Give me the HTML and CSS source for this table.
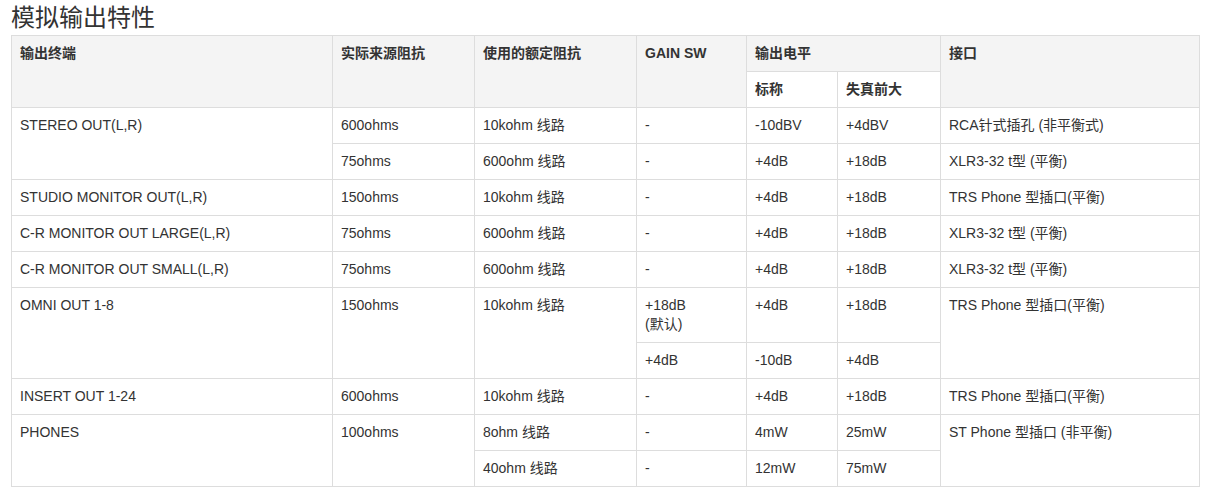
FILE: index.html
```html
<!DOCTYPE html>
<html lang="zh-CN">
<head>
<meta charset="utf-8">
<title>模拟输出特性</title>
<link rel="stylesheet" href="styles.css">
</head>
<body>
<div class="page">
  <h2 class="title">模拟输出特性</h2>
  <table class="spec">
    <colgroup>
      <col class="c1"><col class="c2"><col class="c3"><col class="c4"><col class="c5"><col class="c6"><col class="c7">
    </colgroup>
    <thead>
      <tr class="head-main">
        <th rowspan="2">输出终端</th>
        <th rowspan="2">实际来源阻抗</th>
        <th rowspan="2">使用的额定阻抗</th>
        <th rowspan="2">GAIN SW</th>
        <th colspan="2">输出电平</th>
        <th rowspan="2">接口</th>
      </tr>
      <tr class="head-sub">
        <th>标称</th>
        <th>失真前大</th>
      </tr>
    </thead>
    <tbody>
      <tr>
        <td rowspan="2">STEREO OUT(L,R)</td>
        <td>600ohms</td><td>10kohm 线路</td><td>-</td><td>-10dBV</td><td>+4dBV</td><td>RCA针式插孔 (非平衡式)</td>
      </tr>
      <tr>
        <td>75ohms</td><td>600ohm 线路</td><td>-</td><td>+4dB</td><td>+18dB</td><td>XLR3-32 t型 (平衡)</td>
      </tr>
      <tr>
        <td>STUDIO MONITOR OUT(L,R)</td><td>150ohms</td><td>10kohm 线路</td><td>-</td><td>+4dB</td><td>+18dB</td><td>TRS Phone 型插口(平衡)</td>
      </tr>
      <tr>
        <td>C-R MONITOR OUT LARGE(L,R)</td><td>75ohms</td><td>600ohm 线路</td><td>-</td><td>+4dB</td><td>+18dB</td><td>XLR3-32 t型 (平衡)</td>
      </tr>
      <tr>
        <td>C-R MONITOR OUT SMALL(L,R)</td><td>75ohms</td><td>600ohm 线路</td><td>-</td><td>+4dB</td><td>+18dB</td><td>XLR3-32 t型 (平衡)</td>
      </tr>
      <tr>
        <td rowspan="2">OMNI OUT 1-8</td><td rowspan="2">150ohms</td><td rowspan="2">10kohm 线路</td><td>+18dB<br>(默认)</td><td>+4dB</td><td>+18dB</td><td rowspan="2">TRS Phone 型插口(平衡)</td>
      </tr>
      <tr>
        <td>+4dB</td><td>-10dB</td><td>+4dB</td>
      </tr>
      <tr>
        <td>INSERT OUT 1-24</td><td>600ohms</td><td>10kohm 线路</td><td>-</td><td>+4dB</td><td>+18dB</td><td>TRS Phone 型插口(平衡)</td>
      </tr>
      <tr>
        <td rowspan="2">PHONES</td><td rowspan="2">100ohms</td><td>8ohm 线路</td><td>-</td><td>4mW</td><td>25mW</td><td rowspan="2">ST Phone 型插口 (非平衡)</td>
      </tr>
      <tr>
        <td>40ohm 线路</td><td>-</td><td>12mW</td><td>75mW</td>
      </tr>
    </tbody>
  </table>
</div>
</body>
</html>
```
FILE: styles.css
```css
html, body {
  margin: 0;
  padding: 0;
  background: #fff;
}
body {
  font-family: "Liberation Sans", Arial, "Noto Sans CJK SC", sans-serif;
  font-size: 14px;
  line-height: 19px;
  color: #333;
}
.page {
  padding: 0 9px 0 11px;
}
.title {
  margin: 0;
  padding-top: 2px;
  height: 33px;
  font-family: "Noto Sans CJK SC", "Liberation Sans", sans-serif;
  font-size: 24px;
  line-height: 28px;
  font-weight: 400;
  color: #333;
}
.spec {
  width: 1188px;
  border-collapse: collapse;
  table-layout: fixed;
}
.c1 { width: 321px; }
.c2 { width: 142px; }
.c3 { width: 162px; }
.c4 { width: 110px; }
.c5 { width: 91px; }
.c6 { width: 103px; }
.c7 { width: 259px; }
.spec th,
.spec td {
  border: 1px solid #ddd;
  padding: 8px;
  text-align: left;
  vertical-align: top;
  font-size: 14px;
  line-height: 19px;
  font-family: "Liberation Sans", Arial, "Noto Sans CJK SC", sans-serif;
}
.spec th {
  font-weight: 700;
}
.head-main th {
  background: #f4f4f4;
}
.head-sub th {
  background: #fff;
}
```
